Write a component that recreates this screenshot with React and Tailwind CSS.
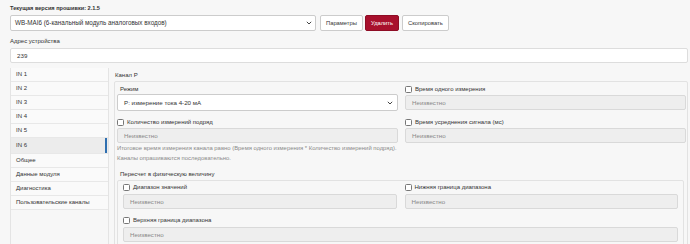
import React from "react";

const F = { fontFamily: '"Liberation Sans", Arial, sans-serif' };

function Chevron() {
  return (
    <svg width="6" height="4" viewBox="0 0 6 4" className="shrink-0">
      <path d="M0.8 0.8 L3 3 L5.2 0.8" fill="none" stroke="#444" strokeWidth="1" />
    </svg>
  );
}

function Check({ label }) {
  return (
    <div className="flex items-center gap-[3px] h-[9px] text-[6px] text-[#333]">
      <span className="w-[7px] h-[7px] border border-[#777] rounded-[1.5px] bg-white" />
      <span>{label}</span>
    </div>
  );
}

function Disabled() {
  return (
    <div className="h-[15px] border border-[#d9d9d9] rounded-[2px] bg-[#eeeeee] flex items-center px-[6px] text-[6.2px] text-[#888]">
      Неизвестно
    </div>
  );
}

export default function App() {
  const nav = ["IN 1", "IN 2", "IN 3", "IN 4", "IN 5", "IN 6", "Общее", "Данные модуля", "Диагностика", "Пользовательские каналы"];
  return (
    <div style={F} className="w-[690px] h-[244px] overflow-hidden bg-[#f7f7f7] text-[#333] pl-[10px] pr-[2px]">
      <div className="h-[15px] pt-[4px] text-[5.6px] font-bold leading-[8px]">Текущая версия прошивки: 2.1.5</div>
      <div className="flex items-center h-[16px] gap-[2px]">
        <div className="w-[306px] h-[16px] bg-white border border-[#ccc] rounded-[2px] flex items-center justify-between pl-[4px] pr-[3px] text-[6.3px]">
          <span>WB-MAI6 (6-канальный модуль аналоговых входов)</span>
          <Chevron />
        </div>
        <div className="ml-[2px] h-[16px] px-[5px] bg-white border border-[#ccc] rounded-[2px] flex items-center text-[5.8px]">Параметры</div>
        <div className="h-[16px] px-[5px] bg-[#a8102d] border border-[#8e0d25] rounded-[2px] flex items-center text-[5.8px] text-white">Удалить</div>
        <div className="ml-[1px] h-[16px] px-[5px] bg-white border border-[#ccc] rounded-[2px] flex items-center text-[5.8px]">Скопировать</div>
      </div>
      <div className="h-[17px] pt-[6px] text-[6px] leading-[8px]">Адрес устройства</div>
      <div className="h-[15px] bg-white border border-[#ddd] rounded-[2px] flex items-center pl-[6px] text-[6.2px]">239</div>
      <div className="flex mt-[5px] gap-[5px]">
        <div className="w-[99px] shrink-0 border-l border-r border-[#e4e4e4] h-[200px]">
          {nav.map((n) => (
            <div
              key={n}
              className={
                "relative h-[14px] flex items-center pl-[5px] text-[6px] border-b border-[#e8e8e8] " +
                (n === "IN 6" ? "bg-[#ececec] h-[16px]" : "bg-[#fafafa]")
              }
            >
              {n}
              {n === "IN 6" && <span className="absolute right-[1px] top-0 bottom-0 w-[2px] bg-[#2f6fb0]" />}
            </div>
          ))}
        </div>
        <div className="flex-1 pt-[3px]">
          <div className="h-[10px] pl-[1px] text-[6px] leading-[8px]">Канал P</div>
          <div className="border border-[#e2e2e2] rounded-[2px] pl-[2px] pr-[1px] pt-[3px] h-[170px]">
            <div className="grid grid-cols-2 gap-x-[7px]">
              <div>
                <div className="h-[9px] pl-[3px] text-[6px] leading-[9px]">Режим</div>
                <div className="h-[17px] bg-white border border-[#ccc] rounded-[2px] flex items-center justify-between pl-[6px] pr-[4px] text-[6.2px]">
                  <span>P: измерение тока 4-20 мА</span>
                  <Chevron />
                </div>
              </div>
              <div>
                <Check label="Время одного измерения" />
                <div className="mt-[1px]"><Disabled /></div>
              </div>
              <div className="mt-[7px]">
                <Check label="Количество измерений подряд" />
                <div className="mt-[1px]"><Disabled /></div>
              </div>
              <div className="mt-[7px]">
                <Check label="Время усреднения сигнала (мс)" />
                <div className="mt-[1px]"><Disabled /></div>
              </div>
            </div>
            <div className="text-[5.9px] leading-[10px] text-[#8a8a8a]">
              <div>Итоговое время измерения канала равно (Время одного измерения * Количество измерений подряд).</div>
              <div>Каналы опрашиваются последовательно.</div>
            </div>
            <div className="mt-[7px] h-[9px] pl-[3px] text-[6px] leading-[9px]">Пересчет в физическую величину</div>
            <div className="mt-[1px] border border-[#e2e2e2] rounded-[2px] px-[5px] pt-[2px] h-[80px] mr-[2px]">
              <div className="grid grid-cols-2 gap-x-[8px]">
                <div>
                  <Check label="Диапазон значений" />
                  <div className="mt-[2px]"><Disabled /></div>
                </div>
                <div>
                  <Check label="Нижняя граница диапазона" />
                  <div className="mt-[2px]"><Disabled /></div>
                </div>
              </div>
              <div className="mt-[7px]">
                <Check label="Верхняя граница диапазона" />
                <div className="mt-[2px]"><Disabled /></div>
              </div>
            </div>
          </div>
        </div>
      </div>
    </div>
  );
}
